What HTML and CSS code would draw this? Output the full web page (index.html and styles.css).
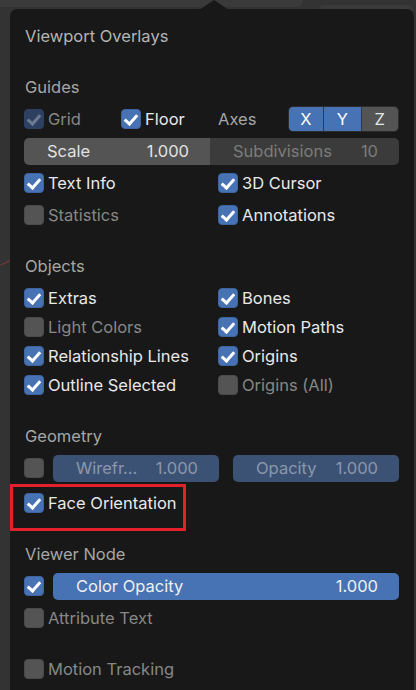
FILE: index.html
```html
<!DOCTYPE html>
<html>
<head>
<meta charset="utf-8">
<link rel="stylesheet" href="styles.css">
</head>
<body>
<div class="bg-header"></div>
<div class="bg-tab"></div>
<div class="bg-line"></div>
<div class="popup">
  <div class="notch"></div>
  <div class="title">Viewport Overlays</div>

  <div class="section">
    <div class="header">Guides</div>
    <div class="row guides-row">
      <label class="check dim"><span class="box on"></span><span class="lbl">Grid</span></label>
      <label class="check"><span class="box on"></span><span class="lbl">Floor</span></label>
      <span class="lbl muted">Axes</span>
      <div class="axes"><span class="axis on">X</span><span class="axis on">Y</span><span class="axis">Z</span></div>
    </div>
    <div class="row">
      <div class="split">
        <div class="field gray"><span>Scale</span><span>1.000</span></div>
        <div class="field dark"><span>Subdivisions</span><span>10</span></div>
      </div>
    </div>
    <div class="row cols">
      <label class="check"><span class="box on"></span><span class="lbl">Text Info</span></label>
      <label class="check"><span class="box on"></span><span class="lbl">3D Cursor</span></label>
    </div>
    <div class="row cols">
      <label class="check off"><span class="box"></span><span class="lbl">Statistics</span></label>
      <label class="check"><span class="box on"></span><span class="lbl">Annotations</span></label>
    </div>
  </div>

  <div class="section">
    <div class="header">Objects</div>
    <div class="grid-tight">
      <label class="check"><span class="box on"></span><span class="lbl">Extras</span></label>
      <label class="check"><span class="box on"></span><span class="lbl">Bones</span></label>
      <label class="check off"><span class="box"></span><span class="lbl">Light Colors</span></label>
      <label class="check"><span class="box on"></span><span class="lbl">Motion Paths</span></label>
      <label class="check"><span class="box on"></span><span class="lbl">Relationship Lines</span></label>
      <label class="check"><span class="box on"></span><span class="lbl">Origins</span></label>
      <label class="check"><span class="box on"></span><span class="lbl">Outline Selected</span></label>
      <label class="check off"><span class="box"></span><span class="lbl">Origins (All)</span></label>
    </div>
  </div>

  <div class="section geo">
    <div class="header">Geometry</div>
    <div class="row geo-row">
      <span class="box"></span>
      <div class="field dimblue"><span>Wirefr...</span><span>1.000</span></div>
      <div class="field dimblue"><span>Opacity</span><span>1.000</span></div>
    </div>
    <div class="row face-row">
      <label class="check"><span class="box on"></span><span class="lbl">Face Orientation</span></label>
      <div class="highlight"></div>
    </div>
  </div>

  <div class="section">
    <div class="header">Viewer Node</div>
    <div class="row viewer-row">
      <span class="box on"></span>
      <div class="field blue"><span>Color Opacity</span><span>1.000</span></div>
    </div>
    <div class="row">
      <label class="check off"><span class="box"></span><span class="lbl">Attribute Text</span></label>
    </div>
  </div>

  <div class="section">
    <div class="row">
      <label class="check off"><span class="box"></span><span class="lbl">Motion Tracking</span></label>
    </div>
  </div>
</div>
</body>
</html>
```
FILE: styles.css
```css
html, body {
  margin: 0;
  padding: 0;
}
body {
  width: 416px;
  height: 690px;
  overflow: hidden;
  background: #333333;
  font-family: Inter, "Noto Sans", sans-serif;
  font-size: 16.5px;
  font-weight: 400;
  position: relative;
  padding: 9px 2px 0 10px;
  box-sizing: border-box;
}
.bg-header {
  position: absolute;
  left: 0;
  top: 0;
  width: 303px;
  height: 7px;
  background: #3a3a3a;
  border-bottom-right-radius: 6px;
}
.bg-tab {
  position: absolute;
  left: 318px;
  top: 5px;
  width: 95px;
  height: 30px;
  background: #3a3a3a;
  border-radius: 6px;
}
.bg-line {
  position: absolute;
  left: 0;
  top: 262px;
  width: 12px;
  height: 1px;
  background: #7a3a3a;
  transform: rotate(-25deg);
}
.popup {
  position: relative;
  width: 404px;
  height: 700px;
  background: #181818;
  border-radius: 7px;
  box-sizing: border-box;
  padding: 11px 15px 0 14px;
  color: #e8e8e8;
}
.notch {
  position: absolute;
  left: 189px;
  top: -9px;
  width: 0;
  height: 0;
  border-left: 15px solid transparent;
  border-right: 15px solid transparent;
  border-bottom: 10px solid #181818;
}
.title {
  height: 32px;
  display: flex;
  align-items: center;
  color: #b4b4b4;
  padding-left: 1px;
}
.section {
  margin-top: 19px;
}
.section.geo {
  margin-top: 21px;
}
.header {
  height: 32px;
  display: flex;
  align-items: center;
  color: #a6a6a6;
  padding-left: 1px;
}
.row {
  height: 32px;
  display: flex;
  align-items: center;
  position: relative;
}
.cols {
  display: grid;
  grid-template-columns: 194px 1fr;
  align-items: center;
}
.guides-row {
  display: grid;
  grid-template-columns: 97px 97px 70px 1fr;
  align-items: center;
}
.grid-tight {
  display: grid;
  grid-template-columns: 194px 1fr;
  grid-auto-rows: 29px;
  align-items: center;
  padding-top: 1px;
}
.check {
  display: flex;
  align-items: center;
  gap: 4px;
  white-space: nowrap;
}
.lbl {
  line-height: 20px;
}
.muted {
  color: #a6a6a6;
}
.check.off .lbl {
  color: #878787;
}
.check.dim .lbl {
  color: #878787;
}
.box {
  width: 20px;
  height: 20px;
  border-radius: 4px;
  background: #545454;
  box-sizing: border-box;
  border: 1px solid #4a4a4a;
  flex: none;
  position: relative;
}
.box.on {
  background: #4772b3;
  border-color: #3f65a0;
}
.box.on::after {
  content: "";
  position: absolute;
  left: 5px;
  top: 2px;
  width: 5px;
  height: 10px;
  border-right: 3px solid #ffffff;
  border-bottom: 3px solid #ffffff;
  transform: rotate(42deg);
}
.check.dim .box.on {
  background: #2e4062;
  border-color: #2e4062;
}
.check.dim .box.on::after {
  border-color: #6c7a92;
}
.axes {
  display: flex;
  height: 26px;
  border-radius: 5px;
  overflow: hidden;
  box-sizing: border-box;
  border: 1px solid #2c2c2c;
}
.axis {
  flex: 1;
  display: flex;
  align-items: center;
  justify-content: center;
  background: #545454;
  color: #e6e6e6;
}
.axis.on {
  background: #4772b3;
  color: #ffffff;
}
.axis + .axis {
  border-left: 1px solid #2a3a55;
}
.axis:first-child {
  flex: 0 0 34px;
}
.split {
  display: flex;
  width: 100%;
  height: 27px;
  border-radius: 5px;
  overflow: hidden;
}
.field {
  display: flex;
  align-items: center;
  justify-content: space-between;
  height: 27px;
  box-sizing: border-box;
  padding: 0 21px 0 23px;
  border-radius: 5px;
}
.split .field {
  border-radius: 0;
}
.field.gray {
  width: 186px;
  background: #545454;
  color: #e2e2e2;
}
.field.dark {
  flex: 1;
  background: #3b3b3b;
  color: #7c7c7c;
}
.geo-row {
  gap: 9px;
}
.geo-row .field {
  width: 166px;
}
.geo-row .field + .field {
  margin-left: 5px;
}
.field.dimblue {
  background: #3c5275;
  color: #8b97a9;
}
.field.blue {
  flex: 1;
  background: #4772b3;
  color: #f0f0f0;
}
.viewer-row {
  gap: 9px;
}
.face-row {
  margin-top: 3px;
}
.highlight {
  position: absolute;
  left: -14px;
  top: -3px;
  width: 176px;
  height: 47px;
  border: 3px solid #e3202b;
  box-sizing: border-box;
}
```
